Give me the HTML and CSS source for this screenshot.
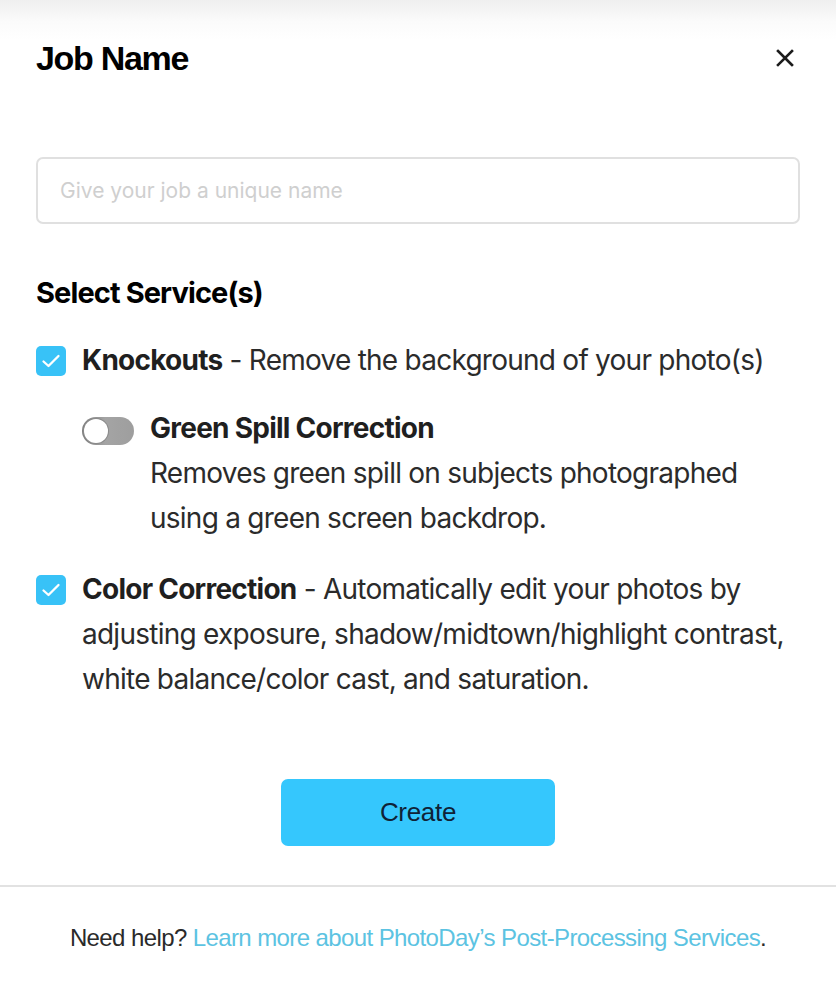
FILE: index.html
```html
<!DOCTYPE html>
<html lang="en">
<head>
<meta charset="utf-8">
<title>Job Name</title>
<link rel="stylesheet" href="styles.css">
</head>
<body>
<div class="modal">
  <div class="modal-body">
    <header class="modal-header">
      <h1 class="modal-title">Job Name</h1>
      <button class="close-btn" aria-label="Close">
        <svg width="18" height="18" viewBox="0 0 18 18"><path d="M2 2 L16 16 M16 2 L2 16" stroke="#1c1c1c" stroke-width="2.6" stroke-linecap="square" fill="none"/></svg>
      </button>
    </header>

    <input class="name-input" type="text" placeholder="Give your job a unique name">

    <h2 class="section-title">Select Service(s)</h2>

    <div class="option">
      <span class="checkbox"><svg width="20" height="16" viewBox="0 0 20 16"><path d="M2.5 8.5 L7.5 13 L17.5 3" stroke="#fff" stroke-width="2.3" fill="none" stroke-linecap="round" stroke-linejoin="round"/></svg></span>
      <p class="option-text"><strong>Knockouts</strong> - Remove the background of your photo(s)</p>
    </div>

    <div class="sub-option">
      <span class="toggle"><span class="knob"></span></span>
      <div class="sub-text">
        <p class="sub-title">Green Spill Correction</p>
        <p class="sub-desc">Removes green spill on subjects photographed using a green screen backdrop.</p>
      </div>
    </div>

    <div class="option option-second">
      <span class="checkbox"><svg width="20" height="16" viewBox="0 0 20 16"><path d="M2.5 8.5 L7.5 13 L17.5 3" stroke="#fff" stroke-width="2.3" fill="none" stroke-linecap="round" stroke-linejoin="round"/></svg></span>
      <p class="option-text"><strong>Color Correction</strong> - Automatically edit your photos by adjusting exposure, shadow/midtown/highlight contrast, white balance/color cast, and saturation.</p>
    </div>

    <div class="actions">
      <button class="create-btn">Create</button>
    </div>
  </div>
  <footer class="modal-footer">
    <p>Need help? <a href="#">Learn more about PhotoDay’s Post-Processing Services</a>.</p>
  </footer>
</div>
</body>
</html>
```

FILE: styles.css
```css
* { box-sizing: border-box; }
html, body { margin: 0; padding: 0; background: #fff; }
body { font-family: "Inter", "Liberation Sans", sans-serif; color: #2a2a2a; }

.modal {
  width: 836px;
  min-height: 984px;
  background: linear-gradient(#efefef 0px, #fbfbfb 22px, #fff 40px);
}
.modal-body { padding: 36px 36px 0 36px; }

.modal-header {
  display: flex;
  align-items: center;
  justify-content: space-between;
  height: 44px;
}
.modal-title {
  margin: 0;
  font-family: "Liberation Sans", Arial, sans-serif;
  font-weight: 700;
  font-size: 34px;
  letter-spacing: -1.3px;
  color: #000;
  line-height: 44px;
}
.close-btn {
  border: 0;
  background: none;
  padding: 0;
  margin-right: 3px;
  width: 24px;
  height: 24px;
  display: flex;
  align-items: center;
  justify-content: center;
}

.name-input {
  display: block;
  width: 100%;
  height: 67px;
  margin-top: 77px;
  border: 2px solid #e0e0e0;
  border-radius: 7px;
  padding: 0 22px;
  font-family: "Inter", sans-serif;
  font-size: 21px;
  letter-spacing: 0;
  color: #333;
  outline: none;
}
.name-input::placeholder { color: #cfcfcf; }

.section-title {
  margin: 49px 0 0 0;
  font-size: 29px;
  font-weight: 700;
  line-height: 40px;
  letter-spacing: -0.9px;
  color: #000;
}

.option {
  display: flex;
  align-items: flex-start;
  gap: 16px;
  margin-top: 25px;
}
.option-second { margin-top: 26px; }
.checkbox {
  flex: none;
  width: 30px;
  height: 30px;
  margin-top: 7.5px;
  border-radius: 5px;
  background: #38c2f7;
  display: flex;
  align-items: center;
  justify-content: center;
}
.option-text, .sub-title, .sub-desc {
  margin: 0;
  font-size: 28px;
  line-height: 45px;
  letter-spacing: -0.75px;
  color: #2b2b2b;
}
.option-text strong, .sub-title { font-weight: 700; color: #1f1f1f; }

.sub-option {
  display: flex;
  align-items: flex-start;
  gap: 16px;
  margin: 23px 0 0 46px;
}
.toggle {
  flex: none;
  position: relative;
  width: 52px;
  height: 28px;
  margin-top: 11px;
  border-radius: 14px;
  background: linear-gradient(90deg, #7d7d7d, #a4a4a4 45%, #9e9e9e);
}
.knob {
  position: absolute;
  left: 2px;
  top: 2px;
  width: 24px;
  height: 24px;
  border-radius: 50%;
  background: #fff;
  box-shadow: 0 0 0 1px #8a8a8a;
}

.actions {
  display: flex;
  justify-content: center;
  margin-top: 77px;
}
.create-btn {
  width: 274px;
  height: 67px;
  border: 0;
  border-radius: 7px;
  background: #35c7fd;
  font-family: "Liberation Sans", Arial, sans-serif;
  font-size: 26px;
  letter-spacing: -0.3px;
  color: #0f2236;
}

.modal-footer {
  margin-top: 39px;
  border-top: 2px solid #e2e2e2;
  padding-top: 36px;
  text-align: center;
}
.modal-footer p {
  margin: 0;
  font-family: "Liberation Sans", Arial, sans-serif;
  font-size: 24px;
  letter-spacing: -0.6px;
  line-height: 30px;
  color: #2a2a2a;
}
.modal-footer a { color: #5cc3e2; text-decoration: none; }
```
